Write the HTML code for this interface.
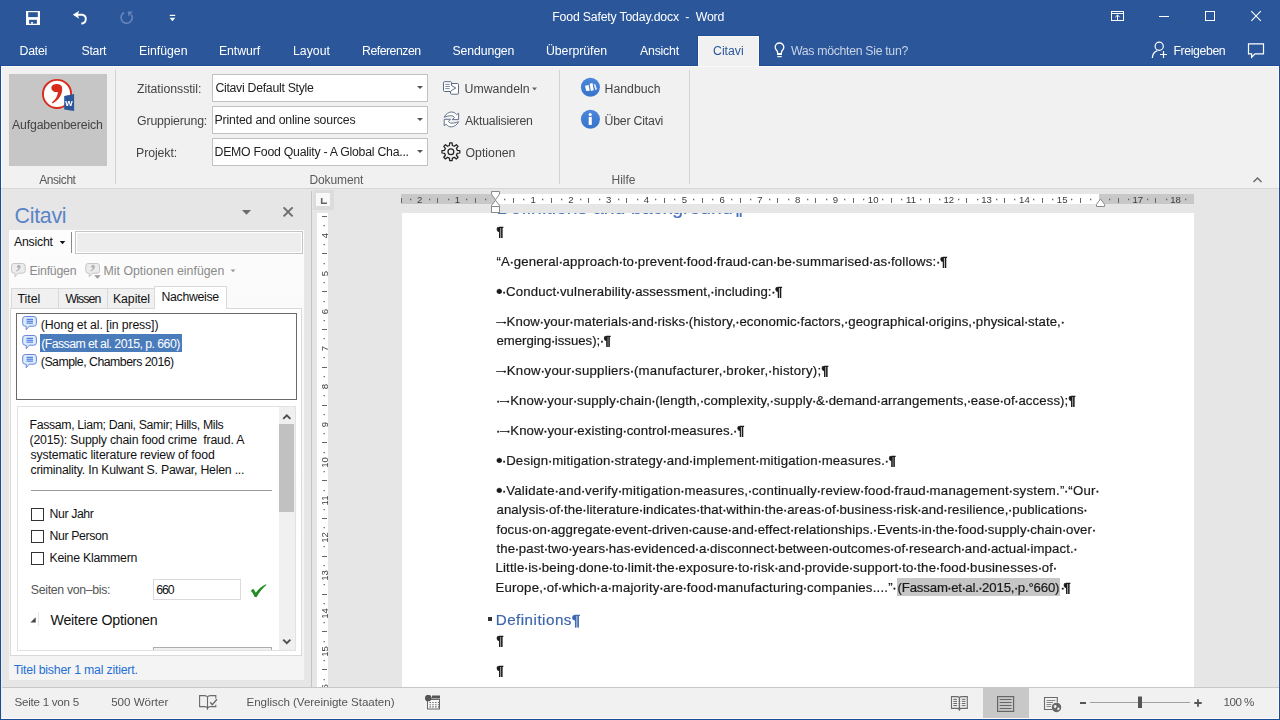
<!DOCTYPE html>
<html lang="de">
<head>
<meta charset="utf-8">
<title>Food Safety Today.docx - Word</title>
<style>
*{box-sizing:border-box;margin:0;padding:0}
html,body{width:1280px;height:720px;overflow:hidden;background:#e6e6e6}
body{font-family:"Liberation Sans",sans-serif;color:#444;position:relative}
.sec{position:absolute;overflow:hidden;will-change:transform}
#pane{will-change:auto}
.t{position:absolute;white-space:pre;line-height:1;display:block}
.abs{position:absolute}
.rn{position:absolute;width:20px;height:11px;line-height:11px;font-size:9.6px;text-align:center;color:#3c3c3c}
.rv{transform:rotate(-90deg)}
#page b{font-weight:normal;font-size:1.45em;line-height:0;position:relative;top:0.13em;margin:0 -0.4px 0 -0.5px}
#page i{font-style:normal;margin:0 -0.45px;-webkit-text-stroke:0.5px}
#page .t{-webkit-text-stroke:0.2px}
#page .p{-webkit-text-stroke:.7px}
svg{position:absolute;overflow:visible}
#title{left:0;top:0;width:1280px;height:33px;background:#2b579a}
#tabs{left:0;top:33px;width:1280px;height:33px;background:#2b579a}
#tabs .active{position:absolute;left:698px;top:3px;width:61px;height:30px;background:#f1f1f1;border:1px solid #fafafa;border-bottom:0;box-shadow:0 0 0 1px #1f4e97}
#ribbon{left:0;top:66px;width:1280px;height:123px;background:#f1f1f1;border-bottom:1px solid #d6d6d6}
.vsep{position:absolute;width:1px;background:#d2d2d2;top:4px;height:114px}
.combo{position:absolute;left:212px;width:216px;height:28px;background:#fff;border:1px solid #c2c2c2}
.combo i{position:absolute;right:4px;top:11px;width:0;height:0;border:3px solid transparent;border-top:3px solid #555;border-bottom:0}
#pane{left:0;top:189px;width:311px;height:498px;background:#e6e6e6}
#doc{left:311px;top:189px;width:969px;height:498px;background:#e6e6e6}
#page{left:402px;top:213px;width:792px;height:474px;background:#fff}
#status{left:0;top:687px;width:1280px;height:33px;background:#f1f1f1;box-shadow:inset 0 1px 0 #c8c8c8}
.frame{position:absolute;background:#2b579a}
.cb{position:absolute;left:31px;width:13px;height:13px;border:1px solid #333;background:#fff}
</style>
</head>
<body>
<!-- ================= TITLE BAR ================= -->
<div class="sec" id="title">
<span class="t" style="left:552.30px;top:11px;font-size:12.3px;color:#fff;letter-spacing:-0.19px;">Food Safety Today.docx  -  Word</span>
<svg width="1280" height="33" viewBox="0 0 1280 33" style="left:0;top:0">
<g id="ic-save"><rect x="26" y="11" width="14" height="14" fill="#fff"/><rect x="28.2" y="12.2" width="9.6" height="4.9" fill="#2b579a"/><rect x="29.1" y="19.8" width="7.8" height="3.9" fill="#2b579a"/><rect x="31.1" y="22" width="1.8" height="1.7" fill="#fff"/></g>
<g id="ic-undo"><path d="M77 14.8 H82.3 A4.4 4.4 0 0 1 81.3 23.5" fill="none" stroke="#fff" stroke-width="1.9"/><path d="M72.8 14.8 L79.2 10.8 L77.6 14.8 L79.2 18.8 Z" fill="#fff"/></g>
<g id="ic-redo" fill="none" stroke="#6584bb" stroke-width="1.7"><path d="M124.2 12.6 A5.6 5.6 0 1 0 131.2 14.4"/><path d="M127.8 11.4 L132.8 11.6 L128.5 16.6 Z" fill="#6584bb" stroke="none"/></g>
<g id="ic-qat" fill="#fff"><rect x="169.8" y="14.8" width="5.4" height="1.2"/><path d="M169.6 17.7 H175.3 L172.45 21.3 Z"/></g>
<g id="ic-ribbonopts" fill="none" stroke="#fff" stroke-width="1"><rect x="1111.5" y="11.5" width="12" height="9"/><path d="M1111.5 13.5 H1123.5 M1117.5 20 V15.2 M1115.3 17.2 L1117.5 15 L1119.7 17.2"/></g>
<path id="ic-min" d="M1159 16.5 H1169" stroke="#fff" stroke-width="1" fill="none"/>
<rect id="ic-max" x="1205.5" y="11.5" width="9" height="9" stroke="#fff" stroke-width="1" fill="none"/>
<path id="ic-close" d="M1251.3 11.2 L1260.8 20.8 M1260.8 11.2 L1251.3 20.8" stroke="#fff" stroke-width="1.1" fill="none"/>
</svg>
</div>
<!-- ================= TAB ROW ================= -->
<div class="sec" id="tabs">
<div class="active"></div>
<span class="t" style="left:19.50px;top:12px;font-size:12.3px;color:#fff;letter-spacing:-0.25px;">Datei</span>
<span class="t" style="left:81.50px;top:12px;font-size:12.3px;color:#fff;letter-spacing:-0.25px;">Start</span>
<span class="t" style="left:139.00px;top:12px;font-size:12.3px;color:#fff;">Einfügen</span>
<span class="t" style="left:219.00px;top:12px;font-size:12.3px;color:#fff;letter-spacing:-0.083px;">Entwurf</span>
<span class="t" style="left:293.00px;top:12px;font-size:12.3px;color:#fff;">Layout</span>
<span class="t" style="left:362.00px;top:12px;font-size:12.3px;color:#fff;letter-spacing:-0.5px;">Referenzen</span>
<span class="t" style="left:452.50px;top:12px;font-size:12.3px;color:#fff;letter-spacing:-0.125px;">Sendungen</span>
<span class="t" style="left:546.00px;top:12px;font-size:12.3px;color:#fff;letter-spacing:-0.056px;">Überprüfen</span>
<span class="t" style="left:640.00px;top:12px;font-size:12.3px;color:#fff;letter-spacing:-0.2px;">Ansicht</span>
<span class="t" style="left:713.00px;top:12px;font-size:12.3px;color:#2b579a;">Citavi</span>
<span class="t" style="left:791.00px;top:12px;font-size:12.3px;color:#c8d3e6;letter-spacing:-0.316px;">Was möchten Sie tun?</span>
<span class="t" style="left:1173.50px;top:12px;font-size:12.3px;color:#fff;letter-spacing:-0.4px;">Freigeben</span>
<svg width="1280" height="33" viewBox="0 33 1280 33" style="left:0;top:0">
<g id="ic-bulb" fill="none" stroke="#fff" stroke-width="1.3"><path d="M777.5 53 V52 C777.5 50.4 775.2 49.8 775.2 47.3 A4.3 4.3 0 1 1 783.8 47.3 C783.8 49.8 781.5 50.4 781.5 52 V53"/><rect x="777" y="53" width="5" height="2" fill="#fff" stroke="none"/><rect x="777.3" y="56.1" width="4.5" height="1.1" fill="#fff" stroke="none"/></g>
<g id="ic-share" fill="none" stroke="#fff" stroke-width="1.2"><circle cx="1159.2" cy="46.3" r="4.1"/><path d="M1152.3 58 C1152.6 54 1154.5 51.6 1157.3 50.6"/><path d="M1160 54.5 H1167 M1163.5 51 V58"/></g>
<path id="ic-comment" d="M1248.5 43.8 H1263.5 V53.8 H1255 L1251.6 57.2 V53.8 H1248.5 Z" fill="none" stroke="#fff" stroke-width="1.2" stroke-linejoin="miter"/>
</svg>
</div>
<!-- ================= RIBBON ================= -->
<div class="sec" id="ribbon">
<div class="abs" style="left:9px;top:8px;width:98px;height:92px;background:#c6c6c6"></div>
<div class="vsep" style="left:115px"></div>
<div class="vsep" style="left:559px"></div>
<div class="vsep" style="left:689px"></div>
<div class="combo" style="top:8px"><i></i></div>
<div class="combo" style="top:40px"><i></i></div>
<div class="combo" style="top:72px"><i></i></div>
<span class="t" style="left:12.00px;top:53px;font-size:12.3px;letter-spacing:-0.157px;">Aufgabenbereich</span>
<span class="t" style="left:39.30px;top:108px;font-size:12px;color:#5a5a5a;letter-spacing:-0.45px;">Ansicht</span>
<span class="t" style="left:137.00px;top:17px;font-size:12.3px;letter-spacing:-0.038px;">Zitationsstil:</span>
<span class="t" style="left:137.00px;top:49px;font-size:12.3px;letter-spacing:-0.136px;">Gruppierung:</span>
<span class="t" style="left:136.00px;top:81px;font-size:12.3px;letter-spacing:-0.071px;">Projekt:</span>
<span class="t" style="left:215.40px;top:16px;font-size:12.3px;color:#222;letter-spacing:-0.284px;">Citavi Default Style</span>
<span class="t" style="left:214.50px;top:48px;font-size:12.3px;color:#222;letter-spacing:-0.18px;">Printed and online sources</span>
<span class="t" style="left:214.50px;top:80px;font-size:12.3px;color:#222;letter-spacing:-0.25px;">DEMO Food Quality - A Global Cha...</span>
<span class="t" style="left:464.50px;top:17px;font-size:12.3px;letter-spacing:0.025px;">Umwandeln</span>
<span class="t" style="left:465.00px;top:49px;font-size:12.3px;letter-spacing:-0.208px;">Aktualisieren</span>
<span class="t" style="left:465.50px;top:81px;font-size:12.3px;">Optionen</span>
<span class="t" style="left:604.50px;top:17px;font-size:12.3px;">Handbuch</span>
<span class="t" style="left:604.50px;top:49px;font-size:12.3px;letter-spacing:-0.2px;">Über Citavi</span>
<span class="t" style="left:309.50px;top:108px;font-size:12px;color:#5a5a5a;letter-spacing:-0.114px;">Dokument</span>
<span class="t" style="left:611.50px;top:108px;font-size:12px;color:#5a5a5a;">Hilfe</span>
<svg width="1280" height="123" viewBox="0 66 1280 123" style="left:0;top:0">
<g id="ic-citavi"><circle cx="57.05" cy="93.95" r="14.1" fill="#fff" stroke="#d92b1c" stroke-width="1.9"/><ellipse cx="56.7" cy="88" rx="5.4" ry="4.1" fill="#d92b1c"/><path d="M62.1 87.6 C62.8 94.5 58.8 100.4 52.6 103.4 L51.9 102.3 C55.5 99.6 57.7 96.2 58 91.4 Z" fill="#d92b1c"/><path d="M64.2 95.9 L74.1 94.1 V110.9 L64.2 109.6 Z" fill="#2b579a"/><text x="68.9" y="106" font-size="9.5" font-weight="bold" fill="#fff" text-anchor="middle" font-family="Liberation Sans, sans-serif">w</text></g>
<g id="ic-convert" fill="#fff" stroke="#5d6a86" stroke-width="1"><rect x="450.5" y="83.5" width="8" height="10.7" rx="1"/><path d="M444.5 81.7 H450.5 Q451.5 81.7 451.5 82.7 V85.6 L455.8 88 L451.5 90.4 V90.5 Q451.5 91.5 450.5 91.5 H444.5 Q443.5 91.5 443.5 90.5 V82.7 Q443.5 81.7 444.5 81.7 Z"/><path d="M445.3 84.4 H449.7 M445.3 86.5 H449.7 M445.3 88.6 H449.7" stroke="#7f8aa6" fill="none"/></g>
<g id="ic-refresh" fill="#fff" stroke="#5d6a86" stroke-width="0.95" stroke-linejoin="round"><path id="rf" d="M444.2 117.2 C446 113.6 449 112 451.5 112 C453.6 112 455.4 113 456.6 114.7 L458.6 113.2 V119.6 H452.3 L454.5 117.5 C453.6 116.3 452.5 115.7 451.3 115.7 C449 115.7 446.8 116.2 444.2 117.2 Z"/><path d="M444.2 117.2 C446 113.6 449 112 451.5 112 C453.6 112 455.4 113 456.6 114.7 L458.6 113.2 V119.6 H452.3 L454.5 117.5 C453.6 116.3 452.5 115.7 451.3 115.7 C449 115.7 446.8 116.2 444.2 117.2 Z" transform="rotate(180 451.4 119.45)"/></g>
<g id="ic-gear" fill="none" stroke="#222" stroke-width="1.25" stroke-linejoin="round"><path d="M449.43 145.47 L449.70 142.88 L452.10 142.88 L452.37 145.47 L454.34 146.28 L456.36 144.65 L458.05 146.34 L456.42 148.36 L457.23 150.33 L459.82 150.60 L459.82 153.00 L457.23 153.27 L456.42 155.24 L458.05 157.26 L456.36 158.95 L454.34 157.32 L452.37 158.13 L452.10 160.72 L449.70 160.72 L449.43 158.13 L447.46 157.32 L445.44 158.95 L443.75 157.26 L445.38 155.24 L444.57 153.27 L441.98 153.00 L441.98 150.60 L444.57 150.33 L445.38 148.36 L443.75 146.34 L445.44 144.65 L447.46 146.28 Z"/><circle cx="450.9" cy="151.8" r="2.9"/></g>
<g id="ic-arrow-umw"><path d="M532 87.5 H537 L534.5 90.5 Z" fill="#666"/></g>
<defs><linearGradient id="gb" x1="0" y1="0" x2="0" y2="1"><stop offset="0" stop-color="#4b87da"/><stop offset="1" stop-color="#3873cc"/></linearGradient></defs>
<g id="ic-handbuch"><circle cx="590.4" cy="87.25" r="9.5" fill="url(#gb)"/><path d="M585 85.7 L588.7 84.9 L589.7 90.8 L586.2 91.1 Z M589.7 83.7 L592.5 82.9 L593.7 90.3 L590.8 91 Z" fill="#fff"/><path d="M593.7 84.4 L595.1 83.9 L597.1 89.3 L595.4 90 Z" fill="#fff" opacity="0.85"/></g>
<g id="ic-info"><circle cx="590.4" cy="119.3" r="9.5" fill="url(#gb)"/><circle cx="590.2" cy="114.5" r="1.55" fill="#fff"/><rect x="588.7" y="116.9" width="3.1" height="8" fill="#fff"/></g>
<path id="ic-collapse" d="M1253.5 182 L1257.5 178 L1261.5 182" fill="none" stroke="#666" stroke-width="1.4"/>
</svg>
</div>
<!-- ================= CITAVI PANE ================= -->
<div class="sec" id="pane">
<!-- inner panel -->
<div class="abs" style="left:9px;top:41px;width:295px;height:450px;background:linear-gradient(#fdfdfd,#fafafa 70px,#f4f4f4)"></div>
<!-- toolbar -->
<div class="abs" style="left:71px;top:43px;width:1px;height:21px;background:#8a8a8a"></div>
<div class="abs" style="left:75px;top:42px;width:228px;height:23px;background:#ededed;border:1px solid #c4c4c4;box-shadow:inset 0 0 0 1px #fff"></div>
<!-- tab strip -->
<div class="abs" style="left:11px;top:99px;width:48px;height:21px;background:#f0f0f0;border:1px solid #d9d9d9"></div>
<div class="abs" style="left:58px;top:99px;width:50px;height:21px;background:#f0f0f0;border:1px solid #d9d9d9"></div>
<div class="abs" style="left:107px;top:99px;width:48px;height:21px;background:#f0f0f0;border:1px solid #d9d9d9"></div>
<div class="abs" style="left:10px;top:119px;width:292px;height:348px;background:#fff;border:1px solid #d9d9d9"></div>
<div class="abs" style="left:154px;top:97px;width:73px;height:23px;background:#fff;border:1px solid #d9d9d9;border-bottom:0"></div>
<!-- list of citations -->
<div class="abs" style="left:16px;top:124px;width:281px;height:87px;background:#fff;border:1px solid #6a6a6a"></div>
<div class="abs" style="left:40px;top:145px;width:142px;height:18px;background:#4a7cbc"></div>
<!-- detail panel -->
<div class="abs" style="left:17px;top:217px;width:279px;height:245px;background:#fff;border:1px solid #e2e2e2"></div>
<div class="abs" style="left:279px;top:218px;width:16px;height:243px;background:#f0f0f0"></div>
<div class="abs" style="left:279px;top:235px;width:15px;height:88px;background:#c1c1c1"></div>
<div class="abs" style="left:31px;top:301px;width:241px;height:1px;background:#9a9a9a"></div>
<div class="cb" style="top:319px"></div>
<div class="cb" style="top:341px"></div>
<div class="cb" style="top:363px"></div>
<div class="abs" style="left:153px;top:390px;width:88px;height:21px;background:#fff;border:1px solid #dcd8dc"></div>
<div class="abs" style="left:153px;top:458px;width:119px;height:3px;background:#f0f0f0;border:1px solid #adadad;border-bottom:0"></div>
<div class="abs" style="left:38px;top:423px;width:1px;height:14px;background:#e4e4e4"></div>
<span class="t" style="left:14.60px;top:17px;font-size:21.4px;color:#5a84c6;letter-spacing:-0.3px;">Citavi</span>
<span class="t" style="left:14.00px;top:47px;font-size:12.3px;color:#111;letter-spacing:-0.217px;">Ansicht</span>
<span class="t" style="left:29.50px;top:76px;font-size:12.3px;color:#8a8a8a;letter-spacing:-0.214px;">Einfügen</span>
<span class="t" style="left:103.50px;top:76px;font-size:12.3px;color:#8a8a8a;letter-spacing:0.025px;">Mit Optionen einfügen</span>
<span class="t" style="left:17.50px;top:104px;font-size:12.3px;color:#111;">Titel</span>
<span class="t" style="left:65.50px;top:104px;font-size:12.3px;color:#111;letter-spacing:-0.9px;">Wissen</span>
<span class="t" style="left:113.00px;top:104px;font-size:12.3px;color:#111;letter-spacing:-0.083px;">Kapitel</span>
<span class="t" style="left:161.50px;top:102px;font-size:12.3px;color:#111;letter-spacing:-0.312px;">Nachweise</span>
<span class="t" style="left:40.80px;top:130px;font-size:12.3px;color:#111;letter-spacing:-0.143px;">(Hong et al. [in press])</span>
<span class="t" style="left:41.20px;top:149px;font-size:12.3px;color:#fff;letter-spacing:-0.544px;">(Fassam et al. 2015, p. 660)</span>
<span class="t" style="left:40.80px;top:167px;font-size:12.3px;color:#111;letter-spacing:-0.491px;">(Sample, Chambers 2016)</span>
<span class="t" style="left:29.50px;top:230px;font-size:12.3px;color:#111;letter-spacing:-0.346px;">Fassam, Liam; Dani, Samir; Hills, Mils</span>
<span class="t" style="left:29.50px;top:245px;font-size:12.3px;color:#111;letter-spacing:-0.2px;">(2015): Supply chain food crime  fraud. A</span>
<span class="t" style="left:30.50px;top:260px;font-size:12.3px;color:#111;letter-spacing:-0.143px;">systematic literature review of food</span>
<span class="t" style="left:30.50px;top:275px;font-size:12.3px;color:#111;letter-spacing:-0.221px;">criminality. In Kulwant S. Pawar, Helen ...</span>
<span class="t" style="left:49.50px;top:319px;font-size:12.3px;color:#111;letter-spacing:-0.4px;">Nur Jahr</span>
<span class="t" style="left:49.50px;top:341px;font-size:12.3px;color:#111;letter-spacing:-0.367px;">Nur Person</span>
<span class="t" style="left:49.50px;top:363px;font-size:12.3px;color:#111;letter-spacing:-0.231px;">Keine Klammern</span>
<span class="t" style="left:30.80px;top:395px;font-size:12.3px;color:#555;letter-spacing:-0.314px;">Seiten von–bis:</span>
<span class="t" style="left:156.20px;top:395px;font-size:12.3px;color:#111;letter-spacing:-1.0px;">660</span>
<span class="t" style="left:50.50px;top:424px;font-size:14.2px;color:#111;letter-spacing:-0.2px;">Weitere Optionen</span>
<span class="t" style="left:13.70px;top:475px;font-size:12.3px;color:#1f6fd6;letter-spacing:-0.2px;">Titel bisher 1 mal zitiert.</span>
<svg width="311" height="498" viewBox="0 189 311 498" style="left:0;top:0">
<path id="ic-pane-menu" d="M242 210 H251 L246.5 214.8 Z" fill="#6b6b6b"/>
<path id="ic-pane-close" d="M283.6 207.4 L292.6 216.4 M292.6 207.4 L283.6 216.4" stroke="#6e6e6e" stroke-width="2" fill="none"/>
<path d="M59.7 241 H65.3 L62.5 244.2 Z" fill="#111"/>
<g transform="translate(11 263)"><path d="M3 0.5 H11.7 Q14.2 0.5 14.2 3 V7.7 Q14.2 10.2 11.7 10.2 H7 L4 13.8 V10.2 H3 Q0.5 10.2 0.5 7.7 V3 Q0.5 0.5 3 0.5 Z" fill="#ececec" stroke="#c6c6c6" stroke-width="1"/><g fill="#b4b4b4" stroke="none"><circle cx="7.7" cy="3.6" r="1.75"/><path d="M9.45 3.5 C9.6 5.9 7.8 7.6 5.3 8.4 L5 7.8 C6.6 7 7.4 6 7.5 4.8 Z"/></g></g>
<g transform="translate(85.3 263)"><path d="M3 0.5 H11.7 Q14.2 0.5 14.2 3 V7.7 Q14.2 10.2 11.7 10.2 H7 L4 13.8 V10.2 H3 Q0.5 10.2 0.5 7.7 V3 Q0.5 0.5 3 0.5 Z" fill="#ececec" stroke="#c6c6c6" stroke-width="1"/><g fill="#b4b4b4" stroke="none"><circle cx="7.7" cy="3.6" r="1.75"/><path d="M9.45 3.5 C9.6 5.9 7.8 7.6 5.3 8.4 L5 7.8 C6.6 7 7.4 6 7.5 4.8 Z"/></g></g>
<path d="M94.2 275.2 H100.7 L97.45 278.7 Z" fill="#9a9a9a"/>
<path d="M230.5 269.5 H235.5 L233 272.3 Z" fill="#9a9a9a"/>
<g transform="translate(22.2 316)"><path d="M3 0.5 H11.7 Q14.2 0.5 14.2 3 V7.7 Q14.2 10.2 11.7 10.2 H7 L4 13.8 V10.2 H3 Q0.5 10.2 0.5 7.7 V3 Q0.5 0.5 3 0.5 Z" fill="#d9eefc" stroke="#6c82dd" stroke-width="1"/><path d="M4.3 3.3 H10.8 M4.3 5.2 H10.8 M4.3 7.1 H10.8" stroke="#3d66d9" stroke-width="1" fill="none"/></g>
<g transform="translate(22.2 335)"><path d="M3 0.5 H11.7 Q14.2 0.5 14.2 3 V7.7 Q14.2 10.2 11.7 10.2 H7 L4 13.8 V10.2 H3 Q0.5 10.2 0.5 7.7 V3 Q0.5 0.5 3 0.5 Z" fill="#d9eefc" stroke="#6c82dd" stroke-width="1"/><path d="M4.3 3.3 H10.8 M4.3 5.2 H10.8 M4.3 7.1 H10.8" stroke="#3d66d9" stroke-width="1" fill="none"/></g>
<g transform="translate(22.2 354)"><path d="M3 0.5 H11.7 Q14.2 0.5 14.2 3 V7.7 Q14.2 10.2 11.7 10.2 H7 L4 13.8 V10.2 H3 Q0.5 10.2 0.5 7.7 V3 Q0.5 0.5 3 0.5 Z" fill="#d9eefc" stroke="#6c82dd" stroke-width="1"/><path d="M4.3 3.3 H10.8 M4.3 5.2 H10.8 M4.3 7.1 H10.8" stroke="#3d66d9" stroke-width="1" fill="none"/></g>
<path id="ic-scroll-up" d="M283.2 418.9 L286.8 415.4 L290.4 418.9" stroke="#505050" stroke-width="2" fill="none"/>
<path id="ic-scroll-down" d="M283.2 639.6 L286.8 643.1 L290.4 639.6" stroke="#505050" stroke-width="2" fill="none"/>
<path id="ic-check" d="M250.8 590.7 L253.2 588.7 C254.2 589.9 255.1 591.3 255.8 592.8 C258.2 589.4 262 585.8 266 584.2 L266.4 585.1 C262.6 588.2 258.9 592.9 256.7 597.1 L254.7 597.1 C253.9 594.8 252.6 592.5 250.8 590.7 Z" fill="#208c23"/>
<path id="ic-expander" d="M35.7 617.2 V622.6 H30.4 Z" fill="#444"/>
</svg>
</div>
<!-- ================= DOCUMENT AREA ================= -->
<div class="sec" id="doc">
<div class="abs" style="left:0px;top:2px;width:1px;height:496px;background:#c3c3c3"></div>
<!-- tab selector -->
<div class="abs" style="left:1.5px;top:0.5px;width:21px;height:20px;background:#dcdcdc"></div>
<div class="abs" style="left:5px;top:4px;width:14px;height:13px;background:#f8f8f8"></div>
<!-- horizontal ruler -->
<div class="abs" style="left:90px;top:5px;width:793px;height:10px;background:#c8c8c8"></div>
<div class="abs" style="left:184.5px;top:5px;width:603px;height:10px;background:#fff"></div>
<!-- vertical ruler -->
<div class="abs" style="left:6px;top:24px;width:11px;height:474px;background:#fff"></div>
<svg width="969" height="498" viewBox="311 189 969 498" style="left:0;top:0">
<path d="M321.7 198 V203.3 H327" stroke="#666" stroke-width="1.6" fill="none"/>
<path d="M401.5 198 V203 M437.5 198 V203 M475.5 198 V203 M513.5 198 V203 M551.5 198 V203 M588.5 198 V203 M626.5 198 V203 M664.5 198 V203 M702.5 198 V203 M740.5 198 V203 M777.5 198 V203 M815.5 198 V203 M853.5 198 V203 M891.5 198 V203 M929.5 198 V203 M966.5 198 V203 M1004.5 198 V203 M1042.5 198 V203 M1080.5 198 V203 M1118.5 198 V203 M1155.5 198 V203" stroke="#666" stroke-width="1" fill="none"/>
<path d="M410 199.5 h1.3 M429 199.5 h1.3 M448 199.5 h1.3 M466 199.5 h1.3 M485 199.5 h1.3 M504 199.5 h1.3 M523 199.5 h1.3 M542 199.5 h1.3 M561 199.5 h1.3 M580 199.5 h1.3 M599 199.5 h1.3 M618 199.5 h1.3 M637 199.5 h1.3 M655 199.5 h1.3 M674 199.5 h1.3 M693 199.5 h1.3 M712 199.5 h1.3 M731 199.5 h1.3 M750 199.5 h1.3 M769 199.5 h1.3 M788 199.5 h1.3 M807 199.5 h1.3 M826 199.5 h1.3 M844 199.5 h1.3 M863 199.5 h1.3 M882 199.5 h1.3 M901 199.5 h1.3 M920 199.5 h1.3 M939 199.5 h1.3 M958 199.5 h1.3 M977 199.5 h1.3 M996 199.5 h1.3 M1014 199.5 h1.3 M1033 199.5 h1.3 M1052 199.5 h1.3 M1071 199.5 h1.3 M1090 199.5 h1.3 M1109 199.5 h1.3 M1128 199.5 h1.3 M1147 199.5 h1.3 M1166 199.5 h1.3 M1185 199.5 h1.3" stroke="#666" stroke-width="1.3" fill="none"/>
<path d="M322 216.5 H327 M322 253.5 H327 M322 291.5 H327 M322 329.5 H327 M322 367.5 H327 M322 405.5 H327 M322 442.5 H327 M322 480.5 H327 M322 518.5 H327 M322 556.5 H327 M322 594.5 H327 M322 631.5 H327 M322 669.5 H327" stroke="#666" stroke-width="1" fill="none"/>
<path d="M324.2 225 v1.3 M324.2 244 v1.3 M324.2 263 v1.3 M324.2 282 v1.3 M324.2 301 v1.3 M324.2 320 v1.3 M324.2 338 v1.3 M324.2 357 v1.3 M324.2 376 v1.3 M324.2 395 v1.3 M324.2 414 v1.3 M324.2 433 v1.3 M324.2 452 v1.3 M324.2 471 v1.3 M324.2 490 v1.3 M324.2 509 v1.3 M324.2 527 v1.3 M324.2 546 v1.3 M324.2 565 v1.3 M324.2 584 v1.3 M324.2 603 v1.3 M324.2 622 v1.3 M324.2 641 v1.3 M324.2 660 v1.3 M324.2 679 v1.3" stroke="#666" stroke-width="1.3" fill="none"/>
<g fill="#fff" stroke="#8a8a8a" stroke-width="1"><path d="M491.5 191.5 H499.5 V194.3 L495.5 199.7 L491.5 194.3 Z"/><path d="M495.5 200.3 L499.5 205.5 V206.5 H491.5 V205.5 Z"/><rect x="491.5" y="206.5" width="8" height="6"/><path d="M1100.5 199 L1104.5 204.3 V206.5 H1096.5 V204.3 Z"/></g>
</svg>
<span class="rn" style="left:98.7px;top:5px">2</span>
<span class="rn" style="left:136.5px;top:5px">1</span>
<span class="rn" style="left:212.1px;top:5px">1</span>
<span class="rn" style="left:249.9px;top:5px">2</span>
<span class="rn" style="left:287.7px;top:5px">3</span>
<span class="rn" style="left:325.5px;top:5px">4</span>
<span class="rn" style="left:363.3px;top:5px">5</span>
<span class="rn" style="left:401.1px;top:5px">6</span>
<span class="rn" style="left:438.9px;top:5px">7</span>
<span class="rn" style="left:476.7px;top:5px">8</span>
<span class="rn" style="left:514.5px;top:5px">9</span>
<span class="rn" style="left:552.2px;top:5px">10</span>
<span class="rn" style="left:590.0px;top:5px">11</span>
<span class="rn" style="left:627.8px;top:5px">12</span>
<span class="rn" style="left:665.6px;top:5px">13</span>
<span class="rn" style="left:703.4px;top:5px">14</span>
<span class="rn" style="left:741.2px;top:5px">15</span>
<span class="rn" style="left:816.8px;top:5px">17</span>
<span class="rn" style="left:854.6px;top:5px">18</span>
<span class="rn rv" style="left:3px;top:41.0px">4</span>
<span class="rn rv" style="left:3px;top:78.8px">5</span>
<span class="rn rv" style="left:3px;top:116.6px">6</span>
<span class="rn rv" style="left:3px;top:154.4px">7</span>
<span class="rn rv" style="left:3px;top:192.2px">8</span>
<span class="rn rv" style="left:3px;top:230.0px">9</span>
<span class="rn rv" style="left:3px;top:267.8px">10</span>
<span class="rn rv" style="left:3px;top:305.6px">11</span>
<span class="rn rv" style="left:3px;top:343.4px">12</span>
<span class="rn rv" style="left:3px;top:381.2px">13</span>
<span class="rn rv" style="left:3px;top:419.0px">14</span>
<span class="rn rv" style="left:3px;top:456.7px">15</span>
<span class="rn rv" style="left:3px;top:494.5px">16</span>
</div>
<div class="sec" id="page">
<div class="abs" style="left:495px;top:365px;width:162.7px;height:17.5px;background:#c6c6c6"></div>
<div class="abs" style="left:86px;top:404px;width:4px;height:4px;background:#333"></div>
<span class="t" style="left:94.40px;top:12px;font-size:13.2px;color:#1a1a1a;"><span class="p">¶</span></span>
<span class="t" style="left:94.40px;top:42px;font-size:13.2px;color:#1a1a1a;letter-spacing:0.178px;">“A<i>·</i>general<i>·</i>approach<i>·</i>to<i>·</i>prevent<i>·</i>food<i>·</i>fraud<i>·</i>can<i>·</i>be<i>·</i>summarised<i>·</i>as<i>·</i>follows:<i>·</i><span class="p">¶</span></span>
<span class="t" style="left:94.40px;top:72px;font-size:13.2px;color:#1a1a1a;letter-spacing:0.149px;"><b>•</b><i>·</i>Conduct<i>·</i>vulnerability<i>·</i>assessment,<i>·</i>including:<i>·</i><span class="p">¶</span></span>
<span class="t" style="left:94.40px;top:102px;font-size:13.2px;color:#1a1a1a;letter-spacing:0.113px;"><span style="font-size:.68em;position:relative;top:-.12em;margin-right:-2.6px;-webkit-text-stroke:.3px">—</span><i>·</i>Know<i>·</i>your<i>·</i>materials<i>·</i>and<i>·</i>risks<i>·</i>(history,<i>·</i>economic<i>·</i>factors,<i>·</i>geographical<i>·</i>origins,<i>·</i>physical<i>·</i>state,<i>·</i></span>
<span class="t" style="left:94.40px;top:121px;font-size:13.2px;color:#1a1a1a;letter-spacing:-0.006px;">emerging<i>·</i>issues);<i>·</i><span class="p">¶</span></span>
<span class="t" style="left:94.40px;top:151px;font-size:13.2px;color:#1a1a1a;letter-spacing:0.256px;"><span style="font-size:.68em;position:relative;top:-.12em;margin-right:-2.6px;-webkit-text-stroke:.3px">—</span><i>·</i>Know<i>·</i>your<i>·</i>suppliers<i>·</i>(manufacturer,<i>·</i>broker,<i>·</i>history);<span class="p">¶</span></span>
<span class="t" style="left:94.40px;top:181px;font-size:13.2px;color:#1a1a1a;letter-spacing:0.114px;"><i>·</i><span style="font-size:.68em;position:relative;top:-.12em;margin-right:-2.6px;-webkit-text-stroke:.3px">—</span><i>·</i>Know<i>·</i>your<i>·</i>supply<i>·</i>chain<i>·</i>(length,<i>·</i>complexity,<i>·</i>supply<i>·</i>&amp;<i>·</i>demand<i>·</i>arrangements,<i>·</i>ease<i>·</i>of<i>·</i>access);<span class="p">¶</span></span>
<span class="t" style="left:94.40px;top:211px;font-size:13.2px;color:#1a1a1a;letter-spacing:0.128px;"><i>·</i><span style="font-size:.68em;position:relative;top:-.12em;margin-right:-2.6px;-webkit-text-stroke:.3px">—</span><i>·</i>Know<i>·</i>your<i>·</i>existing<i>·</i>control<i>·</i>measures.<i>·</i><span class="p">¶</span></span>
<span class="t" style="left:94.40px;top:241px;font-size:13.2px;color:#1a1a1a;letter-spacing:0.203px;"><b>•</b><i>·</i>Design<i>·</i>mitigation<i>·</i>strategy<i>·</i>and<i>·</i>implement<i>·</i>mitigation<i>·</i>measures.<i>·</i><span class="p">¶</span></span>
<span class="t" style="left:94.40px;top:271px;font-size:13.2px;color:#1a1a1a;letter-spacing:0.243px;"><b>•</b><i>·</i>Validate<i>·</i>and<i>·</i>verify<i>·</i>mitigation<i>·</i>measures,<i>·</i>continually<i>·</i>review<i>·</i>food<i>·</i>fraud<i>·</i>management<i>·</i>system.”<i>·</i>“Our<i>·</i></span>
<span class="t" style="left:94.40px;top:290px;font-size:13.2px;color:#1a1a1a;letter-spacing:0.154px;">analysis<i>·</i>of<i>·</i>the<i>·</i>literature<i>·</i>indicates<i>·</i>that<i>·</i>within<i>·</i>the<i>·</i>areas<i>·</i>of<i>·</i>business<i>·</i>risk<i>·</i>and<i>·</i>resilience,<i>·</i>publications<i>·</i></span>
<span class="t" style="left:94.40px;top:310px;font-size:13.2px;color:#1a1a1a;letter-spacing:0.112px;">focus<i>·</i>on<i>·</i>aggregate<i>·</i>event-driven<i>·</i>cause<i>·</i>and<i>·</i>effect<i>·</i>relationships.<i>·</i>Events<i>·</i>in<i>·</i>the<i>·</i>food<i>·</i>supply<i>·</i>chain<i>·</i>over<i>·</i></span>
<span class="t" style="left:94.40px;top:329px;font-size:13.2px;color:#1a1a1a;letter-spacing:0.12px;">the<i>·</i>past<i>·</i>two<i>·</i>years<i>·</i>has<i>·</i>evidenced<i>·</i>a<i>·</i>disconnect<i>·</i>between<i>·</i>outcomes<i>·</i>of<i>·</i>research<i>·</i>and<i>·</i>actual<i>·</i>impact.<i>·</i></span>
<span class="t" style="left:93.40px;top:348px;font-size:13.2px;color:#1a1a1a;letter-spacing:0.199px;">Little<i>·</i>is<i>·</i>being<i>·</i>done<i>·</i>to<i>·</i>limit<i>·</i>the<i>·</i>exposure<i>·</i>to<i>·</i>risk<i>·</i>and<i>·</i>provide<i>·</i>support<i>·</i>to<i>·</i>the<i>·</i>food<i>·</i>businesses<i>·</i>of<i>·</i></span>
<span class="t" style="left:93.40px;top:368px;font-size:13.2px;color:#1a1a1a;letter-spacing:0.209px;">Europe,<i>·</i>of<i>·</i>which<i>·</i>a<i>·</i>majority<i>·</i>are<i>·</i>food<i>·</i>manufacturing<i>·</i>companies....”<i>·</i></span>
<span class="t" style="left:495.50px;top:368px;font-size:13.2px;color:#1a1a1a;letter-spacing:-0.148px;">(Fassam<i>·</i>et<i>·</i>al.<i>·</i>2015,<i>·</i>p.°660)</span>
<span class="t" style="left:659.00px;top:368px;font-size:13.2px;color:#1a1a1a;letter-spacing:-1.0px;"><i>·</i><span class="p">¶</span></span>
<span class="t" style="left:93.70px;top:399px;font-size:15.2px;color:#3c66ad;letter-spacing:0.482px;">Definitions<span class="p">¶</span></span>
<span class="t" style="left:94.40px;top:421px;font-size:13.2px;color:#1a1a1a;"><span class="p">¶</span></span>
<span class="t" style="left:94.40px;top:451px;font-size:13.2px;color:#1a1a1a;"><span class="p">¶</span></span>
<span class="t" style="left:94.50px;top:-15px;font-size:19.5px;color:#4a72b8;letter-spacing:-0.019px;">Definitions<i>·</i>and<i>·</i>background<span class="p">¶</span></span>
</div>
<!-- ================= STATUS BAR ================= -->
<div class="sec" id="status">
<div class="abs" style="left:983px;top:1px;width:46px;height:30px;background:#c8c8c8"></div>
<span class="t" style="left:14.50px;top:9px;font-size:11.6px;color:#555;letter-spacing:-0.25px;">Seite 1 von 5</span>
<span class="t" style="left:111.20px;top:9px;font-size:11.6px;color:#555;letter-spacing:-0.022px;">500 Wörter</span>
<span class="t" style="left:246.50px;top:9px;font-size:11.6px;color:#555;letter-spacing:-0.054px;">Englisch (Vereinigte Staaten)</span>
<span class="t" style="left:1223.50px;top:9px;font-size:11.6px;color:#555;letter-spacing:-0.5px;">100 %</span>
<svg width="1280" height="33" viewBox="0 687 1280 33" style="left:0;top:0">
<g id="ic-proof" fill="none" stroke="#6a6a6a" stroke-width="1.1"><path d="M207.5 697 C207 696 206 695.6 204.5 695.6 H199.6 V706.6 H204.5 C206 706.6 207 707.1 207.5 708.2 V697"/><path d="M207.5 697 C208 696 209 695.6 210.5 695.6 H215.8 V698.6 M215.8 704.8 V706.6 H210.5 C209 706.6 208 707.1 207.5 708.2 V709.8"/><path d="M210.2 702.3 L212.3 704.6 L217 699.2" stroke-width="1.4"/></g>
<g id="ic-macro"><circle cx="428.3" cy="698.2" r="3.1" fill="#555"/><rect x="432" y="695.5" width="8" height="3" fill="#555"/><rect x="427.5" y="699.5" width="12" height="9.5" fill="#f8f8f8" stroke="#666" stroke-width="1"/><path d="M429.5 702.5 h1.4 m1.4 0 h1.4 m1.4 0 h1.4 m1.4 0 h1.4 M429.5 704.7 h1.4 m1.4 0 h1.4 m1.4 0 h1.4 m1.4 0 h1.4 M429.5 706.9 h1.4 m1.4 0 h1.4 m1.4 0 h1.4 m1.4 0 h1.4" stroke="#666" stroke-width="1.1"/><circle cx="428.3" cy="698.2" r="3.1" fill="#555"/></g>
<g id="ic-read" fill="none" stroke="#6a6a6a" stroke-width="1.1"><path d="M959.4 697.6 C958.9 696.9 958 696.6 956.8 696.6 H951.5 V708.4 H956.8 C958 708.4 958.9 708.7 959.4 709.4 C959.9 708.7 960.8 708.4 962 708.4 H967.3 V696.6 H962 C960.8 696.6 959.9 696.9 959.4 697.6 V710.8"/><path d="M953.3 699.3 H957 M953.3 701.4 H957 M953.3 703.5 H957 M953.3 705.6 H957 M961.8 699.3 H965.5 M961.8 701.4 H965.5 M961.8 703.5 H965.5 M961.8 705.6 H965.5" stroke-width="1"/><path d="M958.4 699.3 h2 M958.4 701.4 h2 M958.4 703.5 h2 M958.4 705.6 h2 M958.4 707.5 h2" stroke-width="0.7"/></g>
<g id="ic-print" fill="none" stroke="#666" stroke-width="1.2"><rect x="997.6" y="696.6" width="16" height="14.8"/><path d="M999.6 699.5 H1011.6 M999.6 702.5 H1011.6 M999.6 705.5 H1011.6 M999.6 708.5 H1011.6" stroke-width="1"/></g>
<g id="ic-web" fill="none" stroke="#6a6a6a" stroke-width="1.1"><path d="M1052 709.5 H1044.5 V697.5 H1057.3 V702.5"/><path d="M1046.5 700.5 H1055.3 M1046.5 702.5 H1053 M1046.5 704.5 H1051.5 M1046.5 706.5 H1051" stroke-width="0.8"/><circle cx="1056.5" cy="707.4" r="4.2" fill="#666" stroke="#666"/><path d="M1054 705.5 C1055 704.6 1056.3 704.9 1056.6 706 C1056.8 707 1055.5 707.4 1055.2 708.4 C1054.3 708 1053.6 706.6 1054 705.5 Z M1058 707.5 C1059 707.2 1059.8 707.8 1059.6 708.8 C1059.2 709.8 1058.2 710.4 1057.4 710.2 C1057.2 709.2 1057.3 708 1058 707.5 Z" fill="#f1f1f1" stroke="none"/></g>
<g id="zoom-slider"><rect x="1080" y="702" width="6" height="2" fill="#555"/><rect x="1090" y="702" width="100" height="1" fill="#a0a0a0"/><rect x="1138" y="696.5" width="4" height="11.5" fill="#555"/><path d="M1194.3 703 H1201.7 M1198 699.3 V706.7" stroke="#555" stroke-width="1.8"/></g>
</svg>
</div>
<!-- window frame -->
<div class="frame" style="left:0;top:65px;width:698px;height:1px;background:#1f4e97"></div>
<div class="frame" style="left:759px;top:65px;width:521px;height:1px;background:#1f4e97"></div>
<div class="frame" style="left:1px;top:66px;width:1278px;height:1px;background:#fbfaf6"></div>
<div class="frame" style="left:1px;top:66px;width:1px;height:122px;background:#fbfaf6"></div>
<div class="frame" style="left:1px;top:189px;width:1px;height:529px;background:#efede9"></div>
<div class="frame" style="left:1278px;top:66px;width:1px;height:122px;background:#fbfaf6"></div>
<div class="frame" style="left:1278px;top:189px;width:1px;height:498px;background:#efede9"></div>
<div class="frame" style="left:1278px;top:688px;width:1px;height:30px;background:#fbfaf6"></div>
<div class="frame" style="left:1px;top:718px;width:1278px;height:1px;background:#fbfaf6"></div>
<div class="frame" style="left:0;top:66px;width:1px;height:654px;background:#1c4c96"></div>
<div class="frame" style="left:1279px;top:66px;width:1px;height:654px;background:#1c4c96"></div>
<div class="frame" style="left:0;top:719px;width:1280px;height:1px;background:#1c4c96"></div>
</body>
</html>
